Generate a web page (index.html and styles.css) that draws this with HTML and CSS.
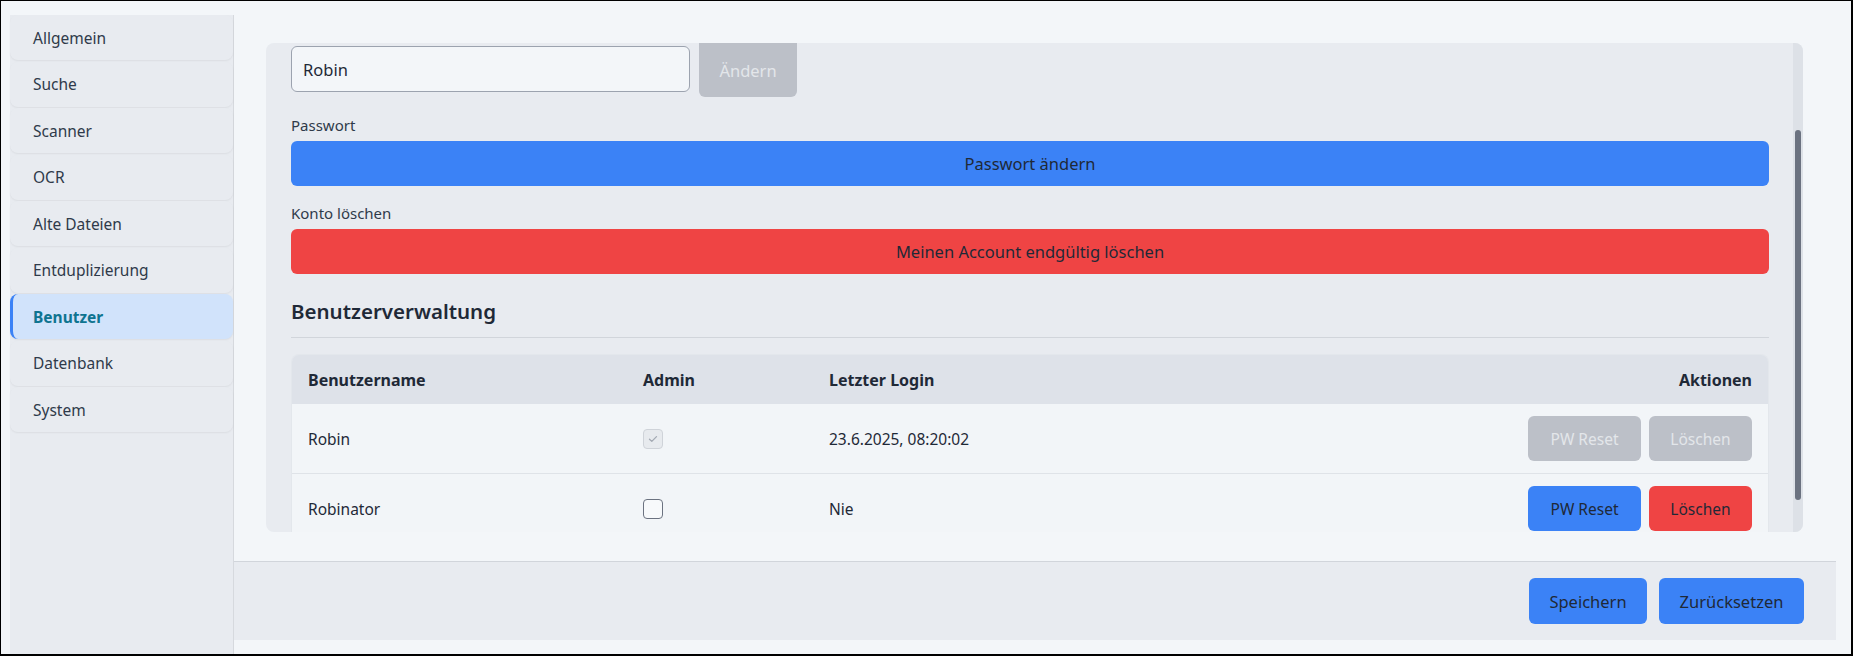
FILE: index.html
```html
<!DOCTYPE html>
<html lang="de">
<head>
<meta charset="utf-8">
<title>Einstellungen – Benutzer</title>
<link rel="stylesheet" href="styles.css">
</head>
<body>
<div class="frame">
  <nav class="sidebar">
    <div class="nav-item">Allgemein</div>
    <div class="nav-item">Suche</div>
    <div class="nav-item">Scanner</div>
    <div class="nav-item">OCR</div>
    <div class="nav-item">Alte Dateien</div>
    <div class="nav-item">Entduplizierung</div>
    <div class="nav-item active">Benutzer</div>
    <div class="nav-item">Datenbank</div>
    <div class="nav-item">System</div>
  </nav>
  <main class="main">
    <section class="panel">
      <div class="panel-content">
        <div class="name-row">
          <input class="text-input" type="text" value="Robin">
          <button class="btn btn-disabled btn-cut">Ändern</button>
        </div>
        <div class="field">
          <div class="field-label">Passwort</div>
          <button class="btn btn-blue btn-wide">Passwort ändern</button>
        </div>
        <div class="field">
          <div class="field-label">Konto löschen</div>
          <button class="btn btn-red btn-wide">Meinen Account endgültig löschen</button>
        </div>
        <h2 class="section-title">Benutzerverwaltung</h2>
        <div class="user-table">
          <div class="t-row t-head">
            <div class="cell">Benutzername</div>
            <div class="cell">Admin</div>
            <div class="cell">Letzter Login</div>
            <div class="cell cell-actions">Aktionen</div>
          </div>
          <div class="t-row">
            <div class="cell">Robin</div>
            <div class="cell"><span class="checkbox checked-disabled"><svg viewBox="0 0 20 20" width="20" height="20"><path d="M6.5 10.2 L8.8 12.4 L13.5 7.6" fill="none" stroke="#a3a9b3" stroke-width="1.3" stroke-linecap="round" stroke-linejoin="round"/></svg></span></div>
            <div class="cell">23.6.2025, 08:20:02</div>
            <div class="cell cell-actions">
              <button class="btn btn-disabled btn-sm btn-reset">PW Reset</button>
              <button class="btn btn-disabled btn-sm btn-del">Löschen</button>
            </div>
          </div>
          <div class="t-row">
            <div class="cell">Robinator</div>
            <div class="cell"><span class="checkbox"></span></div>
            <div class="cell">Nie</div>
            <div class="cell cell-actions">
              <button class="btn btn-blue btn-sm btn-reset">PW Reset</button>
              <button class="btn btn-red btn-sm btn-del">Löschen</button>
            </div>
          </div>
        </div>
      </div>
      <div class="scroll-track"><div class="scroll-thumb"></div></div>
    </section>
    <footer class="footer">
      <button class="btn btn-blue btn-footer btn-save">Speichern</button>
      <button class="btn btn-blue btn-footer btn-revert">Zurücksetzen</button>
    </footer>
  </main>
</div>
</body>
</html>
```

FILE: styles.css
```css
* { box-sizing: border-box; }

html, body {
  margin: 0;
  padding: 0;
}

body {
  font-family: "Noto Sans", "Open Sans", sans-serif;
  color: #1f2937;
  background: #f3f6f9;
}

.frame {
  width: 1853px;
  height: 656px;
  border-style: solid;
  border-color: #000;
  border-width: 1px 2px 2px 1px;
  background: #f3f6f9;
  display: flex;
  padding: 14px 15px 0 9px;
  overflow: hidden;
}

/* Sidebar */
.sidebar {
  width: 224px;
  flex: none;
  background: #e8ebf0;
  border-right: 1px solid #d6d9de;
  display: flex;
  flex-direction: column;
}

.nav-item {
  height: 45px;
  margin-bottom: 1.5px;
  padding: 0 20px;
  border-left: 3px solid transparent;
  border-radius: 8px;
  display: flex;
  align-items: center;
  font-size: 15.5px;
  color: #2f3a4a;
  background: #e8ebf0;
  box-shadow: 0 1px 2px rgba(0, 0, 0, 0.06);
}

.nav-item.active {
  background: #d1e3fb;
  border-left-color: #3b82f6;
  color: #0e7490;
  font-weight: 700;
}

/* Main */
.main {
  flex: 1;
  display: flex;
  flex-direction: column;
  padding: 28px 0 14px;
  min-width: 0;
}

.panel {
  height: 489px;
  margin: 0 33px 0 32px;
  background: #e8ebf0;
  border-radius: 8px;
  display: flex;
  overflow: hidden;
}

.panel-content {
  flex: 1;
  min-width: 0;
  padding: 0 24px 0 25px;
  overflow: hidden;
}

.name-row {
  display: flex;
  align-items: flex-start;
  gap: 9px;
}

.text-input {
  width: 399px;
  height: 46px;
  margin-top: 3px;
  padding: 0 11px;
  border: 1px solid #9ca3af;
  border-radius: 6px;
  background: #f3f6f9;
  font-family: inherit;
  font-size: 16.5px;
  color: #1f2937;
  outline: none;
}

.btn {
  font-family: inherit;
  font-size: 16.5px;
  border: none;
  border-radius: 6px;
  color: #1f2937;
  cursor: pointer;
  padding: 0;
}

.btn-cut {
  height: 54px;
  width: 98px;
  border-radius: 0 0 6px 6px;
}

.btn-disabled {
  background: #bcc0c8;
  color: #e3e6ea;
  cursor: default;
}

.btn-blue { background: #3b82f6; }
.btn-red { background: #ef4444; }

.btn-wide {
  display: block;
  width: 100%;
  height: 45px;
}

.field { margin-top: 18px; }
.field + .field { margin-top: 17px; }

.field-label {
  font-size: 15px;
  line-height: 20px;
  color: #2f3a4a;
  margin-bottom: 6px;
}

.section-title {
  margin: 23px 0 0;
  padding-bottom: 12px;
  border-bottom: 1px solid #d1d5db;
  font-size: 20.5px;
  line-height: 28px;
  font-weight: 600;
  color: #1f2937;
}

/* Table */
.user-table {
  margin-top: 16px;
  border: 1px solid #e3e7ec;
  border-bottom: none;
  border-radius: 8px 8px 0 0;
  overflow: hidden;
  font-size: 15.5px;
}

.t-row {
  display: grid;
  grid-template-columns: 335px 186px 1fr auto;
  align-items: center;
  background: #f2f5f8;
  border-bottom: 1px solid #dfe3e8;
  height: 70px;
}

.t-head {
  height: 49px;
  background: #dee2e9;
  border-bottom: none;
  font-size: 16px;
  font-weight: 700;
}

.cell {
  padding: 0 16px;
}

.cell-actions {
  display: flex;
  justify-content: flex-end;
  gap: 8px;
}

.btn-sm {
  height: 45px;
  font-size: 15.5px;
}

.btn-reset { width: 113px; }
.btn-del { width: 103px; }

.checkbox {
  display: block;
  width: 20px;
  height: 20px;
  border: 1.5px solid #6b7280;
  border-radius: 4px;
  background: #f7f9fb;
}

.checkbox.checked-disabled {
  border: 1px solid #cfd3d9;
  background: #e7eaee;
  position: relative;
}

.checkbox.checked-disabled svg {
  position: absolute;
  left: -1px;
  top: -1px;
}

/* Scrollbar */
.scroll-track {
  width: 10px;
  flex: none;
  background: #dde1e7;
  padding: 87px 2px 0;
}

.scroll-thumb {
  height: 370px;
  background: #6b7280;
  border-radius: 3px;
}

/* Footer */
.footer {
  margin-top: 29px;
  height: 79px;
  border-top: 1px solid #d1d5db;
  background: #e8ebf0;
  display: flex;
  justify-content: flex-end;
  align-items: center;
  gap: 12px;
  padding: 0 32px 0 0;
}

.btn-footer {
  height: 46px;
}

.btn-save { width: 118px; }
.btn-revert { width: 145px; }
```
